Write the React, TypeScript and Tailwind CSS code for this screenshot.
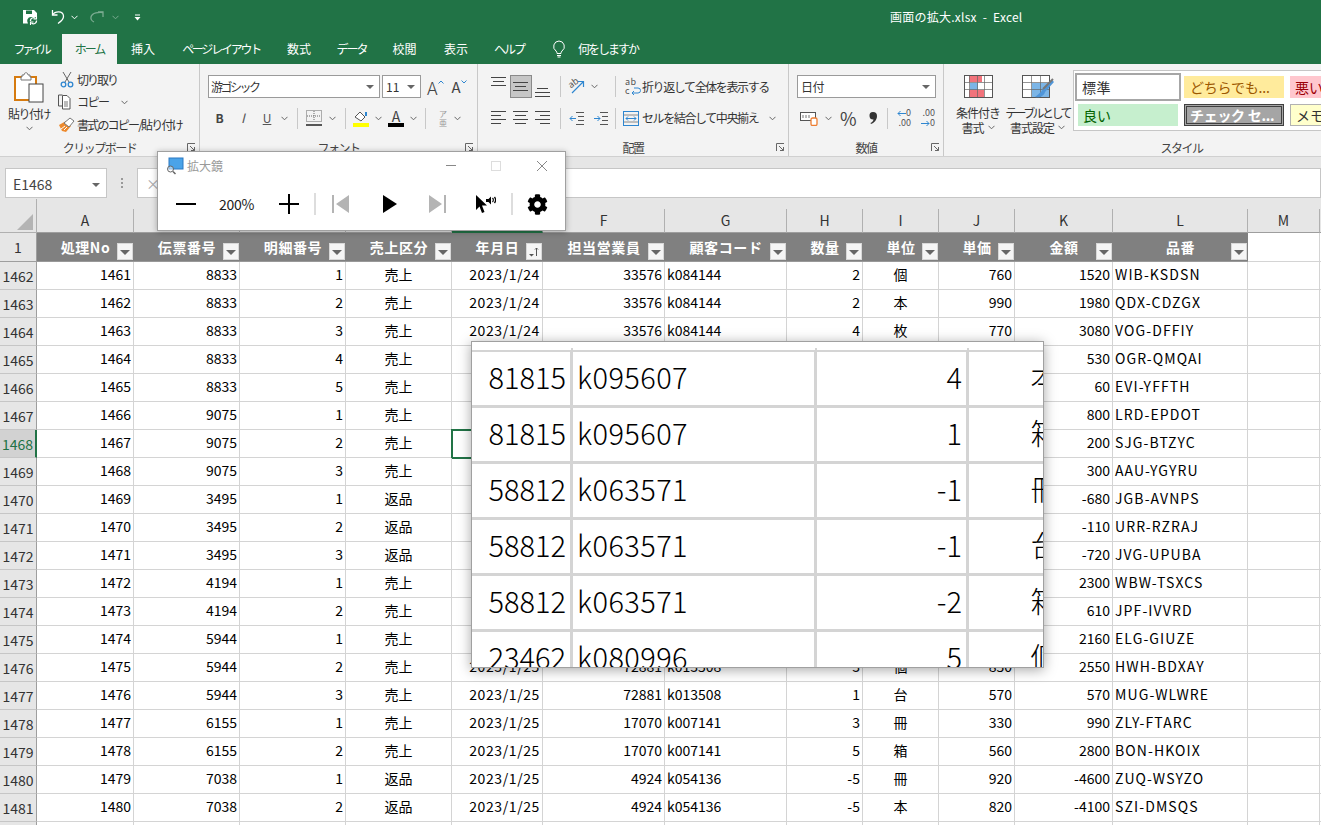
import React from "react";
import { FaCog } from "react-icons/fa";

const jp = "font-['Noto_Sans_CJK_JP','Noto_Sans',sans-serif]";

const colWidths = [97, 106, 106, 106, 91, 122, 122, 76, 76, 76, 98, 135, 72, 80];
const colLetters = ["A", "B", "C", "D", "E", "F", "G", "H", "I", "J", "K", "L", "M", "N"];
const colAlign = ["r", "r", "r", "c", "r", "r", "l", "r", "c", "r", "r", "l", "l", "l"];
const headers = ["処理No", "伝票番号", "明細番号", "売上区分", "年月日", "担当営業員", "顧客コード", "数量", "単位", "単価", "金額", "品番"];

const rows: string[][] = [
  ["1461", "8833", "1", "売上", "2023/1/24", "33576", "k084144", "2", "個", "760", "1520", "WIB-KSDSN"],
  ["1462", "8833", "2", "売上", "2023/1/24", "33576", "k084144", "2", "本", "990", "1980", "QDX-CDZGX"],
  ["1463", "8833", "3", "売上", "2023/1/24", "33576", "k084144", "4", "枚", "770", "3080", "VOG-DFFIY"],
  ["1464", "8833", "4", "売上", "", "", "", "", "", "", "530", "OGR-QMQAI"],
  ["1465", "8833", "5", "売上", "", "", "", "", "", "", "60", "EVI-YFFTH"],
  ["1466", "9075", "1", "売上", "", "", "", "", "", "", "800", "LRD-EPDOT"],
  ["1467", "9075", "2", "売上", "", "", "", "", "", "", "200", "SJG-BTZYC"],
  ["1468", "9075", "3", "売上", "", "", "", "", "", "", "300", "AAU-YGYRU"],
  ["1469", "3495", "1", "返品", "", "", "", "", "", "", "-680", "JGB-AVNPS"],
  ["1470", "3495", "2", "返品", "", "", "", "", "", "", "-110", "URR-RZRAJ"],
  ["1471", "3495", "3", "返品", "", "", "", "", "", "", "-720", "JVG-UPUBA"],
  ["1472", "4194", "1", "売上", "", "", "", "", "", "", "2300", "WBW-TSXCS"],
  ["1473", "4194", "2", "売上", "", "", "", "", "", "", "610", "JPF-IVVRD"],
  ["1474", "5944", "1", "売上", "", "", "", "", "", "", "2160", "ELG-GIUZE"],
  ["1475", "5944", "2", "売上", "2023/1/25", "72881", "k013508", "3", "個", "850", "2550", "HWH-BDXAY"],
  ["1476", "5944", "3", "売上", "2023/1/25", "72881", "k013508", "1", "台", "570", "570", "MUG-WLWRE"],
  ["1477", "6155", "1", "売上", "2023/1/25", "17070", "k007141", "3", "冊", "330", "990", "ZLY-FTARC"],
  ["1478", "6155", "2", "売上", "2023/1/25", "17070", "k007141", "5", "箱", "560", "2800", "BON-HKOIX"],
  ["1479", "7038", "1", "返品", "2023/1/25", "4924", "k054136", "-5", "冊", "920", "-4600", "ZUQ-WSYZO"],
  ["1480", "7038", "2", "返品", "2023/1/25", "4924", "k054136", "-5", "本", "820", "-4100", "SZI-DMSQS"],
  ["", "", "", "", "", "", "", "", "", "", "", ""],
];

const zoomRows = [
  ["81815", "k095607", "4", "本"],
  ["81815", "k095607", "1", "箱"],
  ["58812", "k063571", "-1", "冊"],
  ["58812", "k063571", "-1", "台"],
  ["58812", "k063571", "-2", "箱"],
  ["23462", "k080996", "5", "個"],
];

const Chevron = ({ className = "" }: { className?: string }) => (
  <svg width="7" height="5" viewBox="0 0 7 5" className={className}>
    <path d="M.5 .8 3.5 3.8 6.5 .8" fill="none" stroke="#666" />
  </svg>
);

const Sep = ({ className = "" }: { className?: string }) => <div className={"w-px h-[21px] bg-[#c8c8c8] " + className} />;

const Launcher = () => (
  <svg width="9" height="9" viewBox="0 0 9 9" className="absolute right-[3px] bottom-[4px]">
    <path d="M.5 8V.5H8M3 3l4.5 4.5M7.5 4v3.5H4" fill="none" stroke="#666" />
  </svg>
);

const Triangle = () => <div className="w-0 h-0 border-x-[4px] border-x-transparent border-t-[4px] border-t-[#666]" />;

// alignment glyphs drawn as short lines
const Lines = ({ ys, xs }: { ys: number[]; xs: [number, number][] }) => (
  <svg width="16" height="16" viewBox="0 0 16 16">
    {ys.map((y, i) => (
      <path key={y} d={`M${xs[i][0]} ${y + 0.5}H${xs[i][1]}`} stroke="#444" />
    ))}
  </svg>
);

const FilterButton = ({ sorted }: { sorted?: boolean }) => (
  <div className="absolute right-[1px] top-[10px] w-[16px] h-[17px] bg-[#f5f5f5] border border-[#d8d8d8] flex items-center justify-center">
    {sorted ? (
      <svg width="12" height="12" viewBox="0 0 12 12">
        <path d="M1 8h5L3.5 10.5z" fill="#555" />
        <path d="M8.5 10V2M7 3.5 8.5 2 10 3.5" fill="none" stroke="#555" />
      </svg>
    ) : (
      <div className="w-0 h-0 border-x-[5px] border-x-transparent border-t-[5px] border-t-[#666] mt-[2px]" />
    )}
  </div>
);

const Group = ({ width, label, children }: { width: string; label: string; children: React.ReactNode }) => (
  <div className={"relative shrink-0 flex flex-col h-full border-r border-[#c8c8c8] " + width}>
    <div className="flex-1 min-h-0">{children}</div>
    <div className="h-[19px] text-center text-[12px] leading-[21px] tracking-[-1.5px] text-[#444]">{label}</div>
    <Launcher />
  </div>
);

function TitleBar() {
  return (
    <div className="h-[34px] flex items-center text-white">
      <svg width="16" height="16" viewBox="0 0 16 16" className="ml-[22px]">
        <path d="M1 1h11l3 3v4H9a4 4 0 0 0-3 6.500H1z" fill="#fff" />
        <path d="M4 1.500h6V5H4z" fill="#217346" />
        <path d="M8.500 12a3 3 0 0 1 5-2.500M14.500 11.500a3 3 0 0 1-5 2.500" fill="none" stroke="#fff" strokeWidth="1.300" />
        <path d="M14.500 7v3h-3M8.500 16v-3h3" fill="none" stroke="#fff" strokeWidth="1.100" />
      </svg>
      <svg width="16" height="16" viewBox="0 0 16 16" className="ml-[12px]">
        <path d="M2.500 1v5h5" fill="none" stroke="#fff" strokeWidth="1.300" />
        <path d="M2.500 6C5 2 13 1.500 13.500 7c.2 3-2.500 5.500-5.500 7.500" fill="none" stroke="#fff" strokeWidth="1.300" />
      </svg>
      <svg width="7" height="5" viewBox="0 0 7 5" className="ml-[5px]">
        <path d="M.5 .8 3.500 3.800 6.500 .8" fill="none" stroke="#fff" />
      </svg>
      <svg width="16" height="16" viewBox="0 0 16 16" className="ml-[11px] opacity-40">
        <path d="M9 3h5v5" fill="none" stroke="#fff" strokeWidth="1.300" />
        <path d="M14 3.500C10 3 3 3.500 2 8c-.4 2 1 4 3 5" fill="none" stroke="#fff" strokeWidth="1.300" />
      </svg>
      <svg width="7" height="5" viewBox="0 0 7 5" className="ml-[7px] opacity-40">
        <path d="M.5 .8 3.500 3.800 6.500 .8" fill="none" stroke="#fff" />
      </svg>
      <svg width="7" height="7" viewBox="0 0 7 7" className="ml-[15px]">
        <path d="M1 .5h5V1.500H1zM.5 3h6L3.500 6.500z" fill="#fff" />
      </svg>
      <div className="ml-[749px] text-[12px] tracking-[.25px] whitespace-pre">画面の拡大.xlsx  -  Excel</div>
    </div>
  );
}

function Tabs() {
  const items: [string, string, string][] = [
    ["ファイル", "w-[62px]", "tracking-[-3.2px]"],
    ["ホーム", "w-[55px]", "tracking-[-2px]"],
    ["挿入", "w-[52px]", "tracking-normal"],
    ["ページ レイアウト", "w-[104px]", "tracking-[-2.3px]"],
    ["数式", "w-[52px]", "tracking-normal"],
    ["データ", "w-[53px]", "tracking-[-2px]"],
    ["校閲", "w-[53px]", "tracking-normal"],
    ["表示", "w-[50px]", "tracking-normal"],
    ["ヘルプ", "w-[56px]", "tracking-[-2px]"],
  ];
  return (
    <div className="h-[30px] flex items-stretch text-white text-[12px]">
      {items.map(([t, w, tr]) => (
        <div key={t} className={"flex items-center justify-center whitespace-pre " + w + " " + tr + (t === "ホーム" ? " bg-[#f3f3f3] text-[#217346]" : "")}>
          {t}
        </div>
      ))}
      <svg width="14" height="18" viewBox="0 0 14 18" className="ml-[15px] self-center">
        <path d="M7 1a5.500 5.500 0 0 0-3 10c.8.700 1 1.500 1 2.500h4c0-1 .2-1.800 1-2.500A5.500 5.500 0 0 0 7 1zM5 15.500h4M5.500 17h3" fill="none" stroke="#fff" />
      </svg>
      <div className="ml-[12px] self-center tracking-[-2px]">何をしますか</div>
    </div>
  );
}

function Clipboard() {
  return (
    <Group width="w-[200px]" label="クリップボード">
      <div className="flex h-full">
        <div className="w-[58px] flex flex-col items-center pt-[7px]">
          <svg width="30" height="32" viewBox="0 0 30 32">
            <rect x="1" y="6" width="21" height="23" fill="#fff" stroke="#d67b10" strokeWidth="2" />
            <path d="M8 6V4h2c0-3 4-3 4 0h2v2h1v3H7V6z" fill="#fff" stroke="#777" />
            <rect x="15" y="13" width="14" height="18" fill="#fff" stroke="#444" />
          </svg>
          <div className="text-[12px] tracking-[-1.500px] text-[#333] mt-[3px] leading-[16px]">貼り付け</div>
          <Chevron className="mt-[4px]" />
        </div>
        <div className="flex flex-col text-[12px] text-[#333] pt-[5px]">
          <div className="flex items-center h-[22px]">
            <svg width="14" height="17" viewBox="0 0 14 17" className="ml-[2px]">
              <path d="M3 1l6 10M11 1 5 11" stroke="#666" fill="none" />
              <circle cx="3.500" cy="13.500" r="2.300" fill="none" stroke="#2e86d0" strokeWidth="1.300" />
              <circle cx="10.500" cy="13.500" r="2.300" fill="none" stroke="#2e86d0" strokeWidth="1.300" />
            </svg>
            <span className="ml-[3px] tracking-[-2px]">切り取り</span>
          </div>
          <div className="flex items-center h-[24px]">
            <svg width="18" height="16" viewBox="0 0 18 16">
              <path d="M4.500 1H.5v11H4" fill="none" stroke="#555" />
              <path d="M4.500 1.500H9l3 3V15H4.500z" fill="#fff" stroke="#555" />
              <path d="M6 8h4M6 10h4M6 12h4" stroke="#777" />
            </svg>
            <span className="ml-[1px] tracking-[-1.500px]">コピー</span>
            <Chevron className="ml-[12px]" />
          </div>
          <div className="flex items-center h-[24px]">
            <svg width="18" height="16" viewBox="0 0 18 16">
              <path d="M1 8 8 4l5 5-5 6-4-1z" fill="#ed8a2e" />
              <path d="M6 6l6-5 4 3-5 6z" fill="#fff" stroke="#777" />
              <path d="M3 12l4-3M6 13l3-3" stroke="#fff" />
            </svg>
            <span className="ml-[1px] tracking-[-1.800px] whitespace-nowrap">書式のコピー/貼り付け</span>
          </div>
        </div>
      </div>
    </Group>
  );
}

function FontGroup() {
  return (
    <Group width="w-[278px]" label="フォント">
      <div className="pt-[11px] pl-[8px] flex flex-col gap-[8px] text-[#333]">
        <div className="flex items-center h-[23px]">
          <div className="w-[172px] h-full bg-white border border-[#9a9a9a] flex items-center justify-between px-[2px] text-[12px] tracking-[-2.500px]">
            <span>游ゴシック</span>
            <span className="mr-[3px]"><Triangle /></span>
          </div>
          <div className="ml-[2px] w-[39px] h-full bg-white border border-[#9a9a9a] flex items-center justify-between px-[3px] text-[12px]">
            <span>11</span>
            <span className="mr-[2px]"><Triangle /></span>
          </div>
          <div className="ml-[6px] text-[18px] leading-none font-light text-[#444]">A</div>
          <svg width="6" height="4" viewBox="0 0 6 4" className="mb-[9px]"><path d="M.5 3.500 3 1l2.500 2.500" fill="none" stroke="#2e86d0" /></svg>
          <div className="ml-[8px] text-[15px] leading-none text-[#444]">A</div>
          <svg width="6" height="4" viewBox="0 0 6 4" className="mb-[9px]"><path d="M.5.5 3 3 5.500.5" fill="none" stroke="#2e86d0" /></svg>
        </div>
        <div className="flex items-center h-[24px]">
          <div className="w-[23px] text-center text-[12px] font-bold text-[#444]">B</div>
          <div className="w-[24px] text-center text-[13px] italic text-[#555]">I</div>
          <div className="w-[24px] text-center text-[12px] underline text-[#555]">U</div>
          <Chevron className="ml-[2px]" />
          <Sep className="ml-[9px]" />
          <svg width="16" height="16" viewBox="0 0 16 16" className="ml-[8px]">
            <path d="M.5.5h15v11H.5zM8 1v10M1 6h14" fill="none" stroke="#666" strokeDasharray="1 1" />
            <path d="M0 15h16" stroke="#222" strokeWidth="1.500" />
          </svg>
          <Chevron className="ml-[7px]" />
          <Sep className="ml-[9px]" />
          <div className="ml-[7px] w-[16px] flex flex-col items-center">
            <svg width="16" height="13" viewBox="0 0 16 13">
              <path d="M2 7l5-5 5 5-4 4z" fill="#fff" stroke="#555" />
              <path d="M13 2v4" stroke="#2e86d0" strokeWidth="2" />
            </svg>
            <div className="w-[16px] h-[4px] bg-[#ffff00]" />
          </div>
          <Chevron className="ml-[6px]" />
          <div className="ml-[6px] w-[16px] flex flex-col items-center">
            <div className="text-[14px] leading-[13px] text-[#444]">A</div>
            <div className="w-[16px] h-[4px] bg-black" />
          </div>
          <Chevron className="ml-[6px]" />
          <Sep className="ml-[8px]" />
          <div className="ml-[11px] w-[12px] flex flex-col items-center text-[8px] leading-[9px] text-[#999]">
            <span>ア</span>
            <span>亜</span>
          </div>
          <Chevron className="ml-[5px]" />
        </div>
      </div>
    </Group>
  );
}

function Alignment() {
  const left: [number, number][] = [[0, 15], [0, 10], [0, 15], [0, 10]];
  const center: [number, number][] = [[0, 15], [2, 13], [0, 15], [2, 13]];
  const right: [number, number][] = [[0, 15], [5, 15], [0, 15], [5, 15]];
  return (
    <Group width="w-[311px]" label="配置">
      <div className="pt-[11px] pl-[10px] flex flex-col gap-[8px] text-[12px] text-[#333]">
        <div className="flex items-center h-[23px]">
          <div className="w-[22px] h-full flex items-start justify-center">
            <Lines ys={[2, 6, 10]} xs={[[0, 15], [2, 13], [0, 15]]} />
          </div>
          <div className="w-[22px] h-full flex items-center justify-center bg-[#c6c6c6] border border-[#8a8a8a]">
            <Lines ys={[3, 7, 11]} xs={[[0, 15], [2, 13], [0, 15]]} />
          </div>
          <div className="w-[22px] h-full flex items-end justify-center">
            <Lines ys={[6, 10, 14]} xs={[[2, 13], [0, 15], [0, 15]]} />
          </div>
          <Sep className="ml-[6px]" />
          <div className="relative ml-[7px] w-[18px] h-[17px]">
            <span className="absolute left-0 top-0 text-[9px] leading-[10px] text-[#555] -rotate-[35deg]">ab</span>
            <svg width="18" height="17" viewBox="0 0 18 17" className="absolute inset-0">
              <path d="M4 15 15 4M10 3.500h5.500V9" fill="none" stroke="#2e86d0" strokeWidth="1.200" />
            </svg>
          </div>
          <Chevron className="ml-[5px]" />
          <Sep className="ml-[17px]" />
          <div className="relative ml-[9px] w-[16px] h-[19px] text-[9px] leading-[9px] text-[#555] tracking-[.5px]">
            <div>ab</div>
            <div>c</div>
            <svg width="10" height="9" viewBox="0 0 10 9" className="absolute right-0 bottom-0">
              <path d="M3 1h4a2.500 2.500 0 0 1 0 5H1M3 4 1 6l2 2" fill="none" stroke="#2e86d0" />
            </svg>
          </div>
          <span className="ml-[1px] tracking-[-1.400px] whitespace-nowrap">折り返して全体を表示する</span>
        </div>
        <div className="flex items-center h-[24px]">
          <div className="w-[22px] flex justify-center"><Lines ys={[1, 5, 9, 13]} xs={left} /></div>
          <div className="w-[22px] flex justify-center"><Lines ys={[1, 5, 9, 13]} xs={center} /></div>
          <div className="w-[22px] flex justify-center"><Lines ys={[1, 5, 9, 13]} xs={right} /></div>
          <Sep className="ml-[6px]" />
          <svg width="16" height="14" viewBox="0 0 16 14" className="ml-[8px]">
            <path d="M7 1.500h8M9 5.500h6M9 9.500h6M7 13.500h8" stroke="#555" />
            <path d="M7 7.500H1M3.500 5 1 7.500 3.500 10" fill="none" stroke="#2e86d0" />
          </svg>
          <svg width="16" height="14" viewBox="0 0 16 14" className="ml-[8px]">
            <path d="M7 1.500h8M9 5.500h6M9 9.500h6M7 13.500h8" stroke="#555" />
            <path d="M1 7.500h6M4.500 5 7 7.500 4.500 10" fill="none" stroke="#2e86d0" />
          </svg>
          <Sep className="ml-[6px]" />
          <svg width="16" height="15" viewBox="0 0 16 15" className="ml-[7px]">
            <rect x=".5" y=".5" width="15" height="14" fill="none" stroke="#2e86d0" />
            <path d="M1 4h14M1 11h14" stroke="#888" />
            <path d="M3 7.500h10M5 5.500l-2 2 2 2M11 5.500l2 2-2 2" fill="none" stroke="#2e86d0" />
          </svg>
          <span className="ml-[3px] tracking-[-1.400px] whitespace-nowrap">セルを結合して中央揃え</span>
          <Chevron className="ml-[11px]" />
        </div>
      </div>
    </Group>
  );
}

function NumberGroup() {
  return (
    <Group width="w-[155px]" label="数値">
      <div className="pt-[11px] pl-[8px] flex flex-col gap-[8px] text-[12px] text-[#333]">
        <div className="h-[23px] w-[139px] bg-white border border-[#9a9a9a] flex items-center justify-between px-[3px]">
          <span className="tracking-[-.5px]">日付</span>
          <span className="mr-[2px]"><Triangle /></span>
        </div>
        <div className="flex items-center h-[24px]">
          <svg width="18" height="16" viewBox="0 0 18 16" className="ml-[3px]">
            <rect x=".5" y="2.500" width="15" height="8" fill="#fff" stroke="#555" />
            <path d="M3 5v3M6 5v3M9 5v3" stroke="#777" />
            <rect x="11" y="8" width="6" height="7.500" rx="1.500" fill="#fff" stroke="#ed7d31" strokeWidth="1.300" />
          </svg>
          <Chevron className="ml-[7px]" />
          <span className="ml-[8px] w-[16px] text-[18px] leading-none text-[#444] text-center">%</span>
          <svg width="8" height="12" viewBox="0 0 8 12" className="ml-[13px]">
            <path d="M4 0a4 4 0 0 1 4 4c0 4-3 7-6 8l-.5-1c2-1 3-2.500 3-3.500a3.500 3.500 0 1 1-.5-7.500z" fill="#333" />
          </svg>
          <Sep className="ml-[10px]" />
          <div className="ml-[7px] w-[16px] flex flex-col text-[9px] leading-[10px] text-[#555] items-end">
            <span className="flex items-center">
              <svg width="9" height="7" viewBox="0 0 9 7"><path d="M9 3.500H1M3.500 1 1 3.500 3.500 6" fill="none" stroke="#2e86d0" /></svg>
              0
            </span>
            <span>.00</span>
          </div>
          <div className="ml-[8px] w-[16px] flex flex-col text-[9px] leading-[10px] text-[#555] items-end">
            <span>.00</span>
            <span className="flex items-center">
              <svg width="9" height="7" viewBox="0 0 9 7"><path d="M0 3.500h8M5.500 1 8 3.500 5.500 6" fill="none" stroke="#2e86d0" /></svg>
              0
            </span>
          </div>
        </div>
      </div>
    </Group>
  );
}

function Styles() {
  return (
    <Group width="w-[476px]" label="スタイル">
      <div className="flex h-full text-[12px] text-[#333]">
        <div className="w-[62px] pl-[6px] flex flex-col items-center pt-[11px]">
          <svg width="29" height="23" viewBox="0 0 29 23">
            <rect x=".5" y=".5" width="28" height="22" fill="#fff" stroke="#555" />
            <rect x="5" y="1" width="13" height="6" fill="#f2737b" />
            <rect x="6" y="8" width="8" height="7" fill="#7cb5e6" />
            <rect x="5" y="15" width="15" height="7" fill="#f2737b" />
            <path d="M1 7.500h27M1 14.500h27M5.500 1v21M13.500 1v21M20.500 1v21" stroke="#666" fill="none" strokeWidth=".7" />
          </svg>
          <div className="mt-[7px] leading-[15px] tracking-[-1px] whitespace-nowrap">条件付き</div>
          <div className="leading-[15px] tracking-[-1px] flex items-center gap-[4px]">書式<Chevron /></div>
        </div>
        <div className="w-[67px] pr-[4px] flex flex-col items-center pt-[11px]">
          <svg width="32" height="23" viewBox="0 0 32 23">
            <rect x=".5" y=".5" width="27" height="22" fill="#fff" stroke="#555" />
            <rect x="10" y="8" width="17" height="14" fill="#7cb5e6" />
            <path d="M1 7.500h26M1 14.500h26M9.500 1v21M18.500 1v21" stroke="#666" fill="none" strokeWidth=".7" />
            <path d="M30 5 21 14l-2 3c-2 1-3 3-6 5 5 1 9-1 10-5l9-10z" fill="#4e95d9" />
            <path d="M31 4 21 14" stroke="#777" strokeWidth="2" />
          </svg>
          <div className="mt-[7px] leading-[15px] tracking-[-2.600px] whitespace-nowrap">テーブルとして</div>
          <div className="leading-[15px] tracking-[-1px] flex items-center gap-[4px] whitespace-nowrap">書式設定<Chevron /></div>
        </div>
        <div className="mt-[6px] h-[61px] flex-1 bg-white border border-[#c6c6c6] pl-[1px] pt-[2px] grid grid-cols-[106px_103px_100px] gap-x-[3px] gap-y-[3px] grid-rows-[28px_22px] text-[14px] overflow-hidden">
          <div className="border-2 border-[#a6a6a6] bg-white flex items-center pl-[5px] tracking-[.5px]">標準</div>
          <div className="my-[3px] mr-[3px] bg-[#ffeb9c] text-[#9c5700] flex items-center pl-[6px] tracking-[-.2px] whitespace-nowrap">どちらでも...</div>
          <div className="my-[3px] bg-[#ffc7ce] text-[#9c0006] flex items-center pl-[5px]">悪い</div>
          <div className="mx-[3px] bg-[#c6efce] text-[#006100] flex items-center pl-[5px]">良い</div>
          <div className="mr-[3px] bg-[#a5a5a5] text-white font-bold border-[3px] border-double border-[#3f3f3f] flex items-center pl-[3px] tracking-[-.3px] whitespace-nowrap overflow-hidden">チェック セ...</div>
          <div className="bg-[#ffffcc] border border-[#b2b2b2] flex items-center pl-[5px] whitespace-nowrap">メモ</div>
        </div>
      </div>
    </Group>
  );
}

function FormulaBar() {
  return (
    <div className="h-[42px] bg-[#e6e6e6] flex items-start pt-[11px] pl-[5px]">
      <div className="w-[102px] h-[30px] bg-white border border-[#c6c6c6] flex items-center justify-between pl-[7px] pr-[6px] pt-[3px] text-[14px] text-[#444]">
        <span>E1468</span>
        <Triangle />
      </div>
      <div className="w-[30px] h-[30px] flex flex-col items-center justify-center gap-[2px]">
        <span className="w-[2px] h-[2px] bg-[#999]" />
        <span className="w-[2px] h-[2px] bg-[#999]" />
        <span className="w-[2px] h-[2px] bg-[#999]" />
      </div>
      <div className="flex-1 h-[30px] bg-white border border-[#c6c6c6] pl-[8px] text-[#aaa] text-[14px] leading-[28px]">×</div>
    </div>
  );
}

function ColumnHeader() {
  return (
    <div className="flex h-[34px] bg-[#e6e6e6]">
      <div className="w-[37px] shrink-0 h-full pt-[15px] pl-[17px] border-r border-[#b0b0b0] border-b">
        <div className="w-0 h-0 border-l-[16px] border-l-transparent border-b-[16px] border-b-[#b4b4b4]" />
      </div>
      {colWidths.map((w, i) => (
        <div
          key={colLetters[i]}
          style={{ width: w }}
          className={
            "shrink-0 mt-[10px] h-[24px] flex items-center justify-center text-[14px] text-[#333] border-r border-[#b0b0b0] border-b " +
            (colLetters[i] === "E" ? "bg-[#d2d2d2] border-b-2 border-b-[#217346]" : "border-b-[#9e9e9e]")
          }
        >
          {colLetters[i]}
        </div>
      ))}
    </div>
  );
}

function TableHeader() {
  return (
    <div className="flex h-[29px] bg-white">
      <div className="w-[37px] shrink-0 bg-[#e6e6e6] border-r border-b border-[#9e9e9e] text-center text-[14px] leading-[28px] text-[#333]">1</div>
      {colWidths.map((w, i) => {
        const h = headers[i];
        return h ? (
          <div
            key={h}
            style={{ width: w }}
            className="relative shrink-0 bg-[#808080] border-b border-[#999] text-white font-bold text-[14px] text-center leading-[28px]"
          >
            <span className="tracking-[.6px]">{h}</span>
            <FilterButton sorted={h === "年月日"} />
          </div>
        ) : (
          <div key={colLetters[i]} style={{ width: w }} className="shrink-0 border-b border-r border-[#d4d4d4]" />
        );
      })}
    </div>
  );
}

function DataRow({ values, num }: { values: string[]; num: number }) {
  const active = num === 1468;
  return (
    <div className="flex h-[28px]">
      <div
        className={
          "w-[37px] shrink-0 border-b border-[#c6c6c6] text-[14px] leading-[29px] text-center whitespace-nowrap " +
          (active ? "bg-[#d2d2d2] text-[#217346] border-r-2 border-r-[#217346]" : "bg-[#e6e6e6] text-[#333] border-r border-r-[#9e9e9e]")
        }
      >
        {num}
      </div>
      {colWidths.map((w, i) => {
        const al = colAlign[i];
        return (
          <div
            key={colLetters[i]}
            style={{ width: w }}
            className={
              "shrink-0 border-b border-r border-[#d4d4d4] text-[14px] leading-[25px] px-[2px] text-black whitespace-nowrap " +
              (al === "r" ? "text-right" : al === "c" ? "text-center" : "text-left") +
              (colLetters[i] === "L" ? " tracking-[1.1px]" : "") +
              (colLetters[i] === "E" ? " tracking-[.6px]" : "") +
              (active && colLetters[i] === "E" ? " outline-2 -outline-offset-1 outline-[#217346]" : "")
            }
          >
            {values[i]}
          </div>
        );
      })}
    </div>
  );
}

function Magnifier() {
  return (
    <div className="absolute left-[157px] top-[151px] w-[409px] h-[80px] bg-white border border-[#a0a0a0] shadow-[0_1px_6px_rgba(0,0,0,0.3)] flex flex-col">
      <div className="h-[27px] flex items-center pl-[8px]">
        <svg width="18" height="18" viewBox="0 0 18 18">
          <rect x="3" y="1" width="14" height="11" fill="#4aa3e8" stroke="#2b78c2" />
          <circle cx="4.500" cy="12" r="3" fill="#fff" fillOpacity=".5" stroke="#666" />
          <path d="M7 14.500l2.500 2.500" stroke="#666" strokeWidth="1.500" />
        </svg>
        <span className="ml-[3px] text-[12px] text-[#9a9a9a]">拡大鏡</span>
        <div className="ml-auto flex items-center">
          <div className="w-[10px] h-px bg-[#888] mr-[35px]" />
          <div className="w-[10px] h-[10px] border border-[#ddd] mr-[35px]" />
          <svg width="12" height="12" viewBox="0 0 12 12" className="mr-[17px]">
            <path d="M1 1l10 10M11 1 1 11" stroke="#888" />
          </svg>
        </div>
      </div>
      <div className="flex-1 flex items-center pl-[18px] pb-[1px]">
        <div className="w-[20px] h-[2px] bg-black" />
        <span className="ml-[23px] w-[38px] text-[14px] text-[#222] tracking-[-.3px] whitespace-nowrap">200%</span>
        <svg width="20" height="20" viewBox="0 0 20 20" className="ml-[22px]">
          <path d="M0 10h20M10 0v20" stroke="#000" strokeWidth="2" />
        </svg>
        <div className="ml-[15px] w-[2px] h-[22px] bg-[#ddd]" />
        <svg width="17" height="18" viewBox="0 0 17 18" className="ml-[16px]">
          <path d="M0 0h2v18H0zM17 0v18L4 9z" fill="#b4b4b4" />
        </svg>
        <svg width="14" height="18" viewBox="0 0 14 18" className="ml-[34px]">
          <path d="M0 0l14 9L0 18z" fill="#000" />
        </svg>
        <svg width="17" height="18" viewBox="0 0 17 18" className="ml-[32px]">
          <path d="M0 0l13 9-13 9zM15 0h2v18h-2z" fill="#b4b4b4" />
        </svg>
        <svg width="21" height="20" viewBox="0 0 21 20" className="ml-[29px]">
          <path d="M1 1v15l3.500-3.500L7 19l2.500-1L7 11.500h5z" fill="#000" />
          <path d="M11 5h2.500l2.500-2.500v8L13.500 8H11z" fill="#000" />
          <path d="M17.500 4c1 1 1 3 0 4M19.500 3c1.500 2 1.500 4 0 6" fill="none" stroke="#000" strokeWidth="1.300" />
        </svg>
        <div className="ml-[15px] w-[2px] h-[22px] bg-[#ddd]" />
        <FaCog className="ml-[14px] w-[21px] h-[21px] text-black" />
      </div>
    </div>
  );
}

function ZoomLens() {
  const widths = [101, 244, 152, 152];
  return (
    <div className="absolute left-[471px] top-[341px] w-[573px] h-[327px] bg-white border border-[#a0a0a0] shadow-[0_2px_12px_rgba(0,0,0,0.35)] overflow-hidden">
      <div className="flex h-[10px] border-b-[2px] border-[#d4d4d4]">
        {widths.map((w, i) => (
          <div key={i} style={{ width: w }} className="shrink-0 border-r-[2px] border-[#d4d4d4] mt-[6px]" />
        ))}
      </div>
      {zoomRows.map((r, idx) => (
        <div key={idx} className="flex h-[56px] border-b-[3px] border-[#d4d4d4] text-[29px] font-light text-black leading-[48px]">
          <div style={{ width: widths[0] }} className="shrink-0 border-r-[3px] border-[#d4d4d4] text-right pr-[4px]">{r[0]}</div>
          <div style={{ width: widths[1] }} className="shrink-0 border-r-[3px] border-[#d4d4d4] pl-[4px] tracking-[.4px]">{r[1]}</div>
          <div style={{ width: widths[2] }} className="shrink-0 border-r-[3px] border-[#d4d4d4] text-right pr-[4px]">{r[2]}</div>
          <div style={{ width: widths[3] }} className="shrink-0 text-center">{r[3]}</div>
        </div>
      ))}
    </div>
  );
}

export default function App() {
  return (
    <div className={"relative w-[1321px] h-[825px] overflow-hidden bg-white " + jp}>
      <div className="h-[64px] bg-[#217346]">
        <TitleBar />
        <Tabs />
      </div>
      <div className="h-[93px] flex bg-[#f3f3f3] border-b border-[#d0d0d0]">
        <Clipboard />
        <FontGroup />
        <Alignment />
        <NumberGroup />
        <Styles />
      </div>
      <FormulaBar />
      <ColumnHeader />
      <TableHeader />
      {rows.map((r, i) => (
        <DataRow key={i} values={r} num={1462 + i} />
      ))}
      <Magnifier />
      <ZoomLens />
    </div>
  );
}
